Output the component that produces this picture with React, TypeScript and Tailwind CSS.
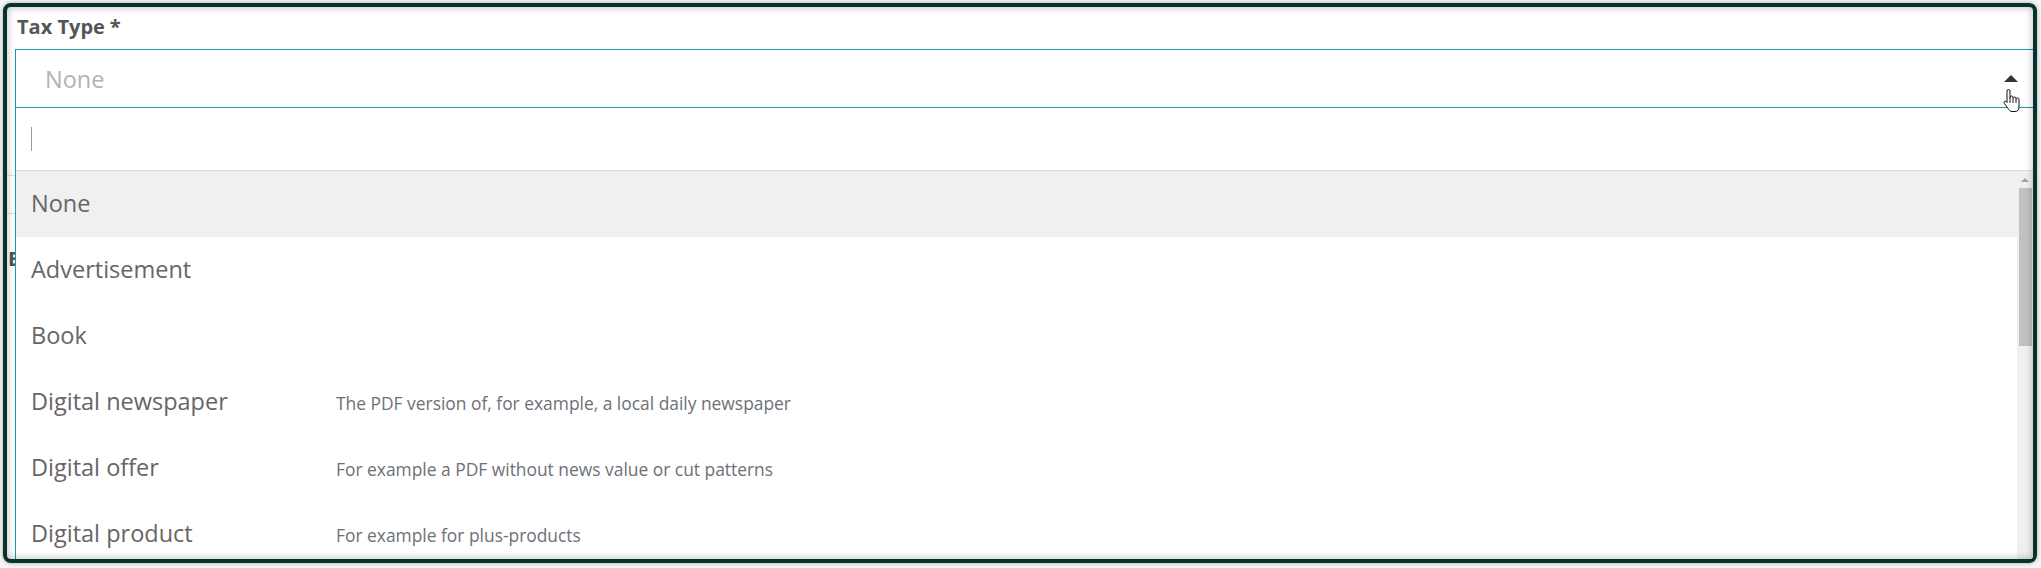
import React from "react";

type Item = { label: string; desc?: string; active?: boolean };

const items: Item[] = [
  { label: "None", active: true },
  { label: "Advertisement" },
  { label: "Book" },
  { label: "Digital newspaper", desc: "The PDF version of, for example, a local daily newspaper" },
  { label: "Digital offer", desc: "For example a PDF without news value or cut patterns" },
  { label: "Digital product", desc: "For example for plus-products" },
  { label: "Magazine" },
  { label: "Newspaper" },
];

function HandCursor() {
  return (
    <svg width="19" height="26" viewBox="0 0 19 26" className="block">
      <path
        d="M4 3 A1.5 1.5 0 0 1 7 3 L7 10 L7 9.5 A1.5 1.5 0 0 1 10 9.5 L10 10.5 A1.5 1.5 0 0 1 13 10.5 L13 11.5 A1.5 1.5 0 0 1 16 11.5 L16 19 C16 21.8 14.5 23.5 12 23.5 L9 23.5 C7 23.5 6 22 5 20.5 L1.2 15.2 A1.3 1.3 0 0 1 3 13.4 L4 14.6 Z"
        fill="#ffffff"
        stroke="#111111"
        strokeWidth="1"
        strokeLinejoin="round"
      />
      <path d="M7 10 L7 15 M10 10.5 L10 15 M13 11.5 L13 15" stroke="#111111" strokeWidth="0.9" fill="none" />
    </svg>
  );
}

export default function App() {
  return (
    <div className="w-[2041px] h-[568px] bg-[#f7f7f7] p-[3px] font-['Open_Sans',sans-serif]">
      <div className="relative h-[560px] w-[2034px] overflow-hidden rounded-[8px] border-4 border-[#06332d] bg-white shadow-[0_0_4px_rgba(0,0,0,0.35)]">
        <div className="flex flex-col">
          <div className="flex pl-[10px] pt-[8px] text-[20px] leading-[24px] font-bold text-[#555555]">
            <span>Tax Type</span>
            <span className="ml-[5px]">*</span>
          </div>
          <div className="relative mt-[10px] ml-[8px] -mr-px">
            <div className="flex h-[59px] items-center border border-[#1a9aa8] pl-[29px] pr-[15px]">
              <span className="flex-1 text-[23.5px] leading-[30px] text-[#b3b3b3]">None</span>
              <svg width="14" height="7" viewBox="0 0 14 7" className="block">
                <path d="M0 7 L7 0 L14 7 Z" fill="#333333" />
              </svg>
            </div>

            <div className="absolute left-0 right-0 top-full z-[5] flex h-[470px] flex-col border-l border-[#1a9aa8] bg-white">
              <div className="flex h-[63px] shrink-0 items-center border-b border-[#dddddd] pl-[15px]">
                <div className="h-[24px] w-px bg-[#9a9a9a]" />
              </div>
              <div className="flex min-h-0 flex-1">
                <div className="flex flex-1 flex-col overflow-hidden">
                  {items.map((it) => (
                    <div
                      key={it.label}
                      className={`flex h-[66px] shrink-0 items-center pb-[2px] pl-[15px] ${it.active ? "bg-[#f0f0f0]" : "bg-white"}`}
                    >
                      <div className="flex items-baseline">
                        <span className="w-[305px] shrink-0 text-[23.5px] leading-[32px] text-[#666666]">
                          {it.label}
                        </span>
                        {it.desc && (
                          <span className="text-[17.4px] leading-[24px] text-[#6c7178]">{it.desc}</span>
                        )}
                      </div>
                    </div>
                  ))}
                </div>
                <div className="flex w-[17px] shrink-0 flex-col bg-[#f0f0f0]">
                  <div className="flex h-[17px] w-[16px] items-center justify-center">
                    <svg width="8" height="4" viewBox="0 0 8 4" className="block">
                      <path d="M0 4 L4 0 L8 4 Z" fill="#a3a3a3" />
                    </svg>
                  </div>
                  <div className="ml-[2px] h-[158px] w-[13px] bg-[#c1c1c1]" />
                </div>
              </div>
            </div>

            <div className="pointer-events-none absolute left-[1988px] top-[39px] z-[6]">
              <HandCursor />
            </div>
          </div>

          <div className="mt-[67px] h-[38px] border-t border-[#dedede]" />
          <div className="border-t border-[#dedede] pl-[1px] pt-[33px] text-[20px] leading-[24px] font-bold text-[#555555]">
            Edition *
          </div>
        </div>
        <div className="pointer-events-none absolute inset-0 z-10 shadow-[inset_0_0_8px_rgba(0,0,0,0.28)]" />
      </div>
    </div>
  );
}
